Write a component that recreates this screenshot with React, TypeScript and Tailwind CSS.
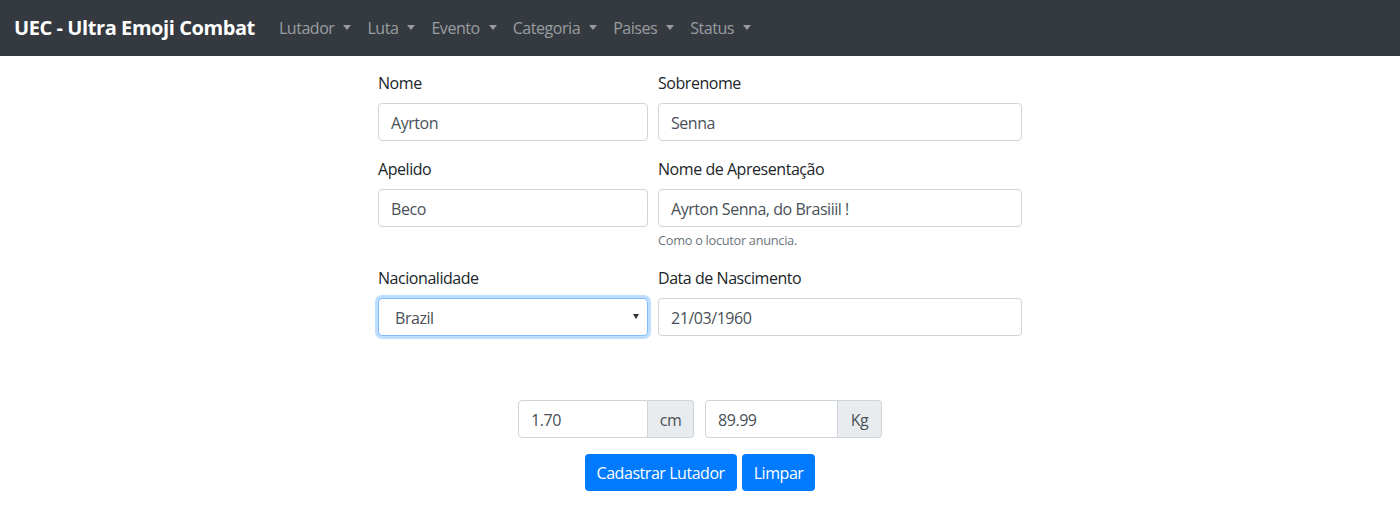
import React from "react";

const menus = ["Lutador", "Luta", "Evento", "Categoria", "Paises", "Status"];

function Caret() {
  return (
    <span className="inline-block ml-[9px] align-[4px] w-0 h-0 border-t-[5px] border-t-current border-x-[4px] border-x-transparent" />
  );
}

function Label({ children }: { children: React.ReactNode }) {
  return <label className="block mb-2 leading-6">{children}</label>;
}

function Field({
  label,
  value,
  help,
}: {
  label: string;
  value: string;
  help?: string;
}) {
  return (
    <div className="mb-4">
      <Label>{label}</Label>
      <input
        readOnly
        value={value}
        className="block w-full h-[38px] px-3 pt-[2px] border border-[#ced4da] rounded-[4px] text-[#495057] bg-white outline-none"
      />
      {help && <small className="block mt-1 text-[12.8px] leading-[19px] text-[#6c757d] tracking-[-0.3px]">{help}</small>}
    </div>
  );
}

export default function App() {
  return (
    <div className="min-h-[512px] bg-white text-[16px] text-[#212529] tracking-[-0.45px] font-['Open_Sans','Noto_Sans',sans-serif]">
      <nav className="flex items-center h-14 px-[14px] bg-[#343a40]">
        <span className="text-[20px] leading-[30px] font-bold text-white mr-4 tracking-[-0.42px]">UEC - Ultra Emoji Combat</span>
        <ul className="flex">
          {menus.map((m) => (
            <li key={m} className="px-2 leading-6 text-white/50">
              {m}
              <Caret />
            </li>
          ))}
        </ul>
      </nav>

      <div className="w-[644px] mx-auto pt-[15px] grid grid-cols-[270px_364px] gap-x-[10px] items-start">
        <Field label="Nome" value="Ayrton" />
        <Field label="Sobrenome" value="Senna" />
        <Field label="Apelido" value="Beco" />
        <Field label="Nome de Apresentação" value="Ayrton Senna, do Brasiiil !" help="Como o locutor anuncia." />
        <div className="mb-4">
          <Label>Nacionalidade</Label>
          <div className="relative h-[38px] border border-[#80bdff] rounded-[4px] shadow-[0_0_0_3px_rgba(0,123,255,0.25)] bg-white flex items-center pt-[2px] pl-[16px] text-[#495057]">
            Brazil
            <span className="absolute right-[8px] top-[15px] w-0 h-0 border-t-[5px] border-t-[#333] border-x-[3.5px] border-x-transparent" />
          </div>
        </div>
        <Field label="Data de Nascimento" value="21/03/1960" />
      </div>

      <div className="flex justify-center gap-[11px] mt-[48px]">
        {[
          ["1.70", "cm", "w-[130px]", "w-[46px]"],
          ["89.99", "Kg", "w-[133px]", "w-[44px]"],
        ].map(([v, u, wi, wa]) => (
          <div key={u} className="flex h-[38px]">
            <input
              readOnly
              value={v}
              className={`${wi} px-3 pt-[2px] border border-[#ced4da] rounded-l-[4px] text-[#495057] outline-none`}
            />
            <span className={`${wa} flex items-center justify-center pt-[2px] border border-l-0 border-[#ced4da] rounded-r-[4px] bg-[#e9ecef] text-[#495057]`}>
              {u}
            </span>
          </div>
        ))}
      </div>

      <div className="flex justify-center gap-[5px] mt-4">
        <button className="h-[37px] px-3 pt-[1px] rounded-[4px] bg-[#007bff] text-white">Cadastrar Lutador</button>
        <button className="h-[37px] px-3 pt-[1px] rounded-[4px] bg-[#007bff] text-white">Limpar</button>
      </div>
    </div>
  );
}
